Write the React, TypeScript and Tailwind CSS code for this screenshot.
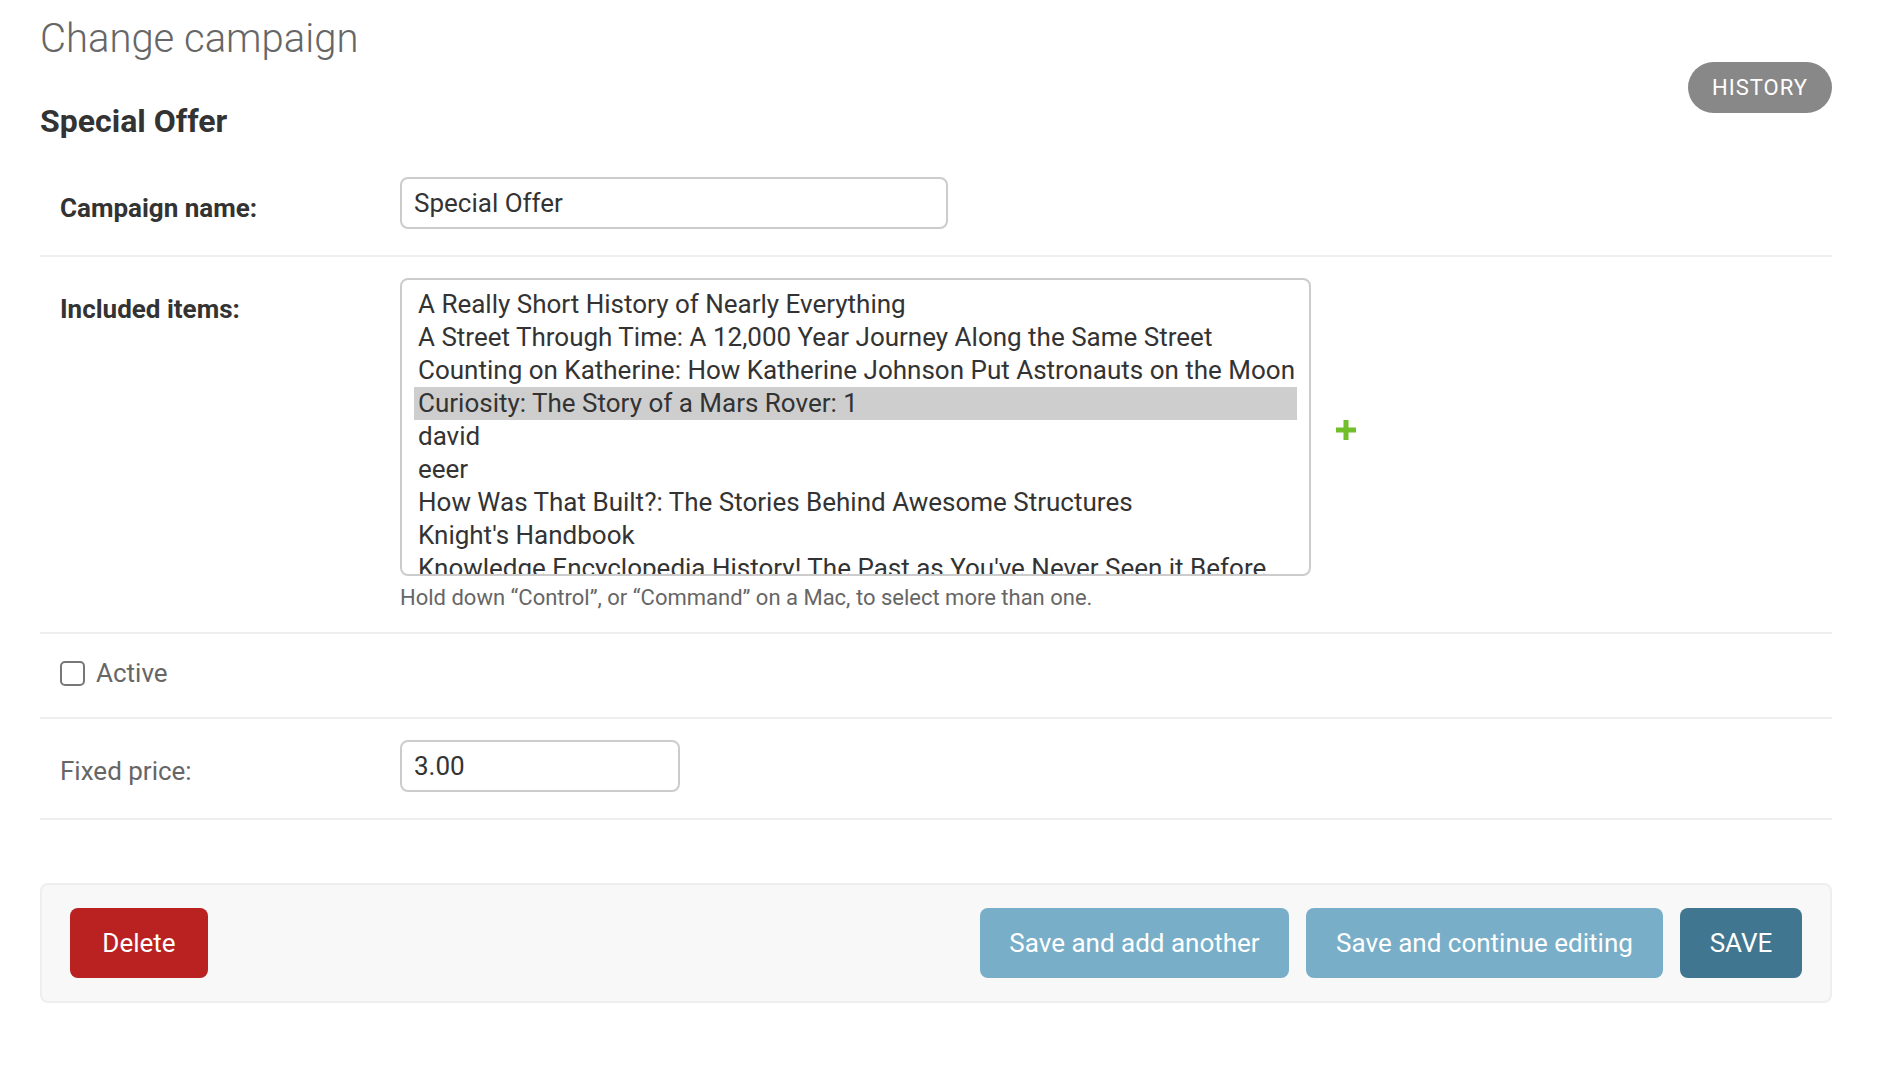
import React from "react";

const items = [
  "A Really Short History of Nearly Everything",
  "A Street Through Time: A 12,000 Year Journey Along the Same Street",
  "Counting on Katherine: How Katherine Johnson Put Astronauts on the Moon",
  "Curiosity: The Story of a Mars Rover: 1",
  "david",
  "eeer",
  "How Was That Built?: The Stories Behind Awesome Structures",
  "Knight's Handbook",
  "Knowledge Encyclopedia History! The Past as You've Never Seen it Before",
];

export default function App() {
  return (
    <div
      className="min-h-[1090px] w-full bg-white pl-[40px] pr-[54px] pt-[15px] text-[#333]"
      style={{ fontFamily: "Roboto, 'Liberation Sans', sans-serif" }}
    >
      <div className="flex items-start justify-between">
        <div>
          <h1 className="text-[40px] font-light leading-[48px] text-[#666]">Change campaign</h1>
          <h2 className="mt-[38px] text-[32px] font-bold leading-[40px] text-[#333]">Special Offer</h2>
        </div>
        <a className="mt-[47px] flex h-[51px] w-[144px] items-center justify-center rounded-full bg-[#888] text-[22px] uppercase tracking-[1px] text-white">
          History
        </a>
      </div>

      <div className="mt-[15px]">
        {/* Campaign name */}
        <div className="flex border-b-2 border-[#eee] px-[20px] pb-[26px] pt-[21px]">
          <div className="w-[340px] shrink-0 pt-[18px] text-[26px] font-bold leading-[26px] text-[#333]">
            Campaign name:
          </div>
          <div className="flex h-[52px] w-[548px] items-center rounded-[8px] border-2 border-[#ccc] px-[12px] text-[26px] text-[#333]">
            Special Offer
          </div>
        </div>

        {/* Included items */}
        <div className="flex border-b-2 border-[#eee] px-[20px] pb-[19px] pt-[21px]">
          <div className="w-[340px] shrink-0 pt-[18px] text-[26px] font-bold leading-[26px] text-[#333]">
            Included items:
          </div>
          <div>
            <div className="flex items-center">
              <div className="h-[298px] w-[911px] overflow-hidden rounded-[8px] border-2 border-[#ccc] px-[12px] pt-[8px] text-[26px] text-[#333]">
                {items.map((t, i) => (
                  <div
                    key={i}
                    className={
                      "h-[33px] whitespace-nowrap px-[4px] leading-[33px] " +
                      (i === 3 ? "bg-[#cecece]" : "")
                    }
                  >
                    {t}
                  </div>
                ))}
              </div>
              <svg className="ml-[24px] mt-[6px]" width="22" height="22" viewBox="0 0 22 22">
                <path d="M8.5 1h5v7.5H21v5h-7.5V21h-5v-7.5H1v-5h7.5z" fill="#70bf2b" />
              </svg>
            </div>
            <div className="mt-[7px] text-[22px] leading-[30px] text-[#666]">
              Hold down “Control”, or “Command” on a Mac, to select more than one.
            </div>
          </div>
        </div>

        {/* Active */}
        <div className="flex border-b-2 border-[#eee] px-[20px] pb-[25px] pt-[21px]">
          <div className="flex h-[37px] items-center">
            <div className="h-[25px] w-[25px] rounded-[5px] border-2 border-[#777] bg-white" />
            <span className="ml-[11px] text-[26px] text-[#666]">Active</span>
          </div>
        </div>

        {/* Fixed price */}
        <div className="flex border-b-2 border-[#eee] px-[20px] pb-[26px] pt-[21px]">
          <div className="w-[340px] shrink-0 pt-[18px] text-[26px] leading-[26px] text-[#666]">Fixed price:</div>
          <div className="flex h-[52px] w-[280px] items-center rounded-[8px] border-2 border-[#ccc] px-[12px] text-[26px] text-[#333]">
            3.00
          </div>
        </div>
      </div>

      {/* Submit row */}
      <div className="mt-[63px] flex items-center justify-between rounded-[8px] border-2 border-[#eee] bg-[#f8f8f8] px-[28px] py-[23px]">
        <a className="flex h-[70px] w-[138px] items-center justify-center rounded-[8px] bg-[#ba2121] text-[26px] text-white">
          Delete
        </a>
        <div className="flex gap-[17px]">
          <button className="h-[70px] w-[309px] rounded-[8px] bg-[#79aec8] text-[26px] text-white">
            Save and add another
          </button>
          <button className="h-[70px] w-[357px] rounded-[8px] bg-[#79aec8] text-[26px] text-white">
            Save and continue editing
          </button>
          <button className="h-[70px] w-[122px] rounded-[8px] bg-[#417690] text-[26px] text-white">
            SAVE
          </button>
        </div>
      </div>
    </div>
  );
}
